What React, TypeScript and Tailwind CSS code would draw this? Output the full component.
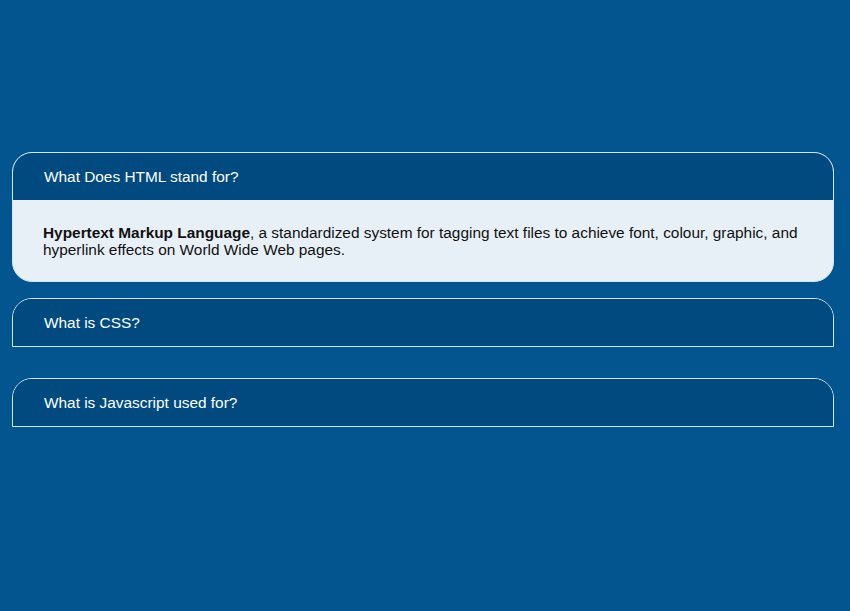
const faqs = [
  { q: "What Does HTML stand for?", open: true },
  { q: "What is CSS?", open: false },
  { q: "What is Javascript used for?", open: false },
];

export default function App() {
  return (
    <div className="min-h-[611px] w-full bg-[#02558f] pt-[152px] font-['Liberation_Sans',Arial,sans-serif]">
      <div className="ml-[12px] w-[822px]">
        {faqs.map((item, i) => (
          <div
            key={item.q}
            className={
              item.open
                ? "overflow-hidden rounded-[20px] border border-[#d3e6f5] bg-[#e8f0f7]"
                : i === 1
                ? "mt-[16px] overflow-hidden rounded-t-[20px] border border-[#d3e6f5]"
                : "mt-[31px] overflow-hidden rounded-t-[20px] border border-[#d3e6f5]"
            }
          >
            <div className="flex h-[47px] items-center bg-[#004a7f] pl-[31px] text-[15.4px] text-white">
              {item.q}
            </div>
            {item.open && (
              <div className="px-[30px] pt-[24px] pb-[23px] text-[15.4px] leading-[17px] text-[#111]">
                <strong>Hypertext Markup Language</strong>, a standardized system for tagging text files to achieve font, colour, graphic, and hyperlink effects on World Wide Web pages.
              </div>
            )}
          </div>
        ))}
      </div>
    </div>
  );
}
